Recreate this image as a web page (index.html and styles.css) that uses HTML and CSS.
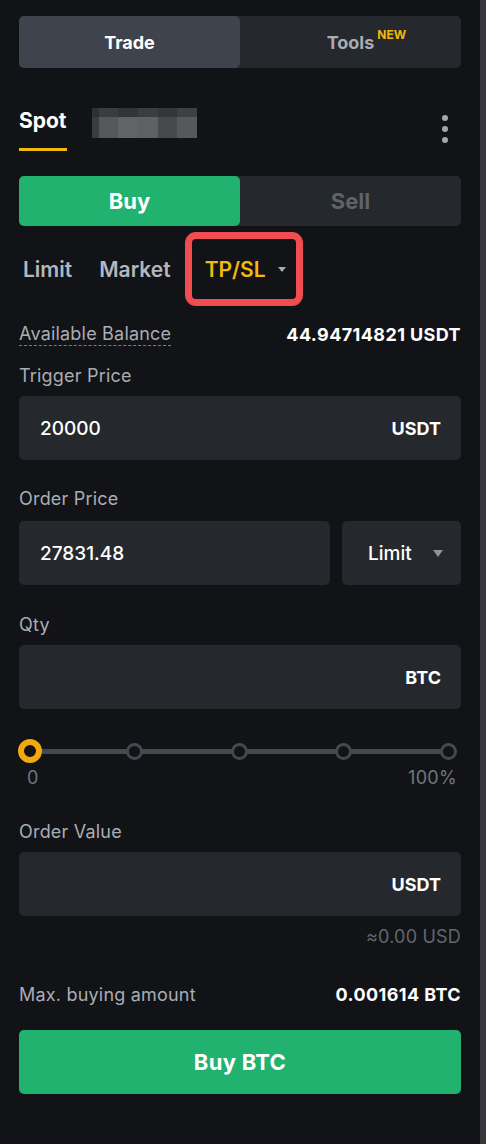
FILE: index.html
```html
<!DOCTYPE html>
<html lang="en">
<head>
<meta charset="utf-8">
<title>Trade</title>
<link rel="stylesheet" href="styles.css">
</head>
<body>
<div class="page">
  <main class="panel">
    <div class="seg top-tabs">
      <div class="seg-item active">Trade</div>
      <div class="seg-item tools"><span class="tools-label">Tools<sup class="new">NEW</sup></span></div>
    </div>

    <div class="spot-row">
      <div class="spot-tab">Spot</div>
      <div class="blur">
        <span class="b c1"></span><span class="b c2"></span><span class="b c3"></span><span class="b c4"></span><span class="b c5"></span><span class="b c6"></span>
        <span class="b d1"></span><span class="b d2"></span><span class="b d3"></span><span class="b d4"></span><span class="b d5"></span><span class="b d6"></span>
      </div>
      <div class="kebab"><i></i><i></i><i></i></div>
    </div>

    <div class="seg side">
      <div class="seg-item buy">Buy</div>
      <div class="seg-item sell">Sell</div>
    </div>

    <div class="types">
      <span class="type t-limit">Limit</span>
      <span class="type t-market">Market</span>
      <span class="type tpsl">TP/SL <span class="caret small"></span></span>
    </div>

    <div class="kv balance">
      <span class="dash">Available Balance</span>
      <span class="val">44.94714821 USDT</span>
    </div>

    <div class="label l-trigger">Trigger Price</div>
    <div class="field"><span class="num">20000</span><span class="unit">USDT</span></div>

    <div class="label l-order">Order Price</div>
    <div class="field-row">
      <div class="field grow"><span class="num">27831.48</span></div>
      <div class="field select"><span class="num">Limit</span><span class="caret"></span></div>
    </div>

    <div class="label l-qty">Qty</div>
    <div class="field"><span class="num"></span><span class="unit">BTC</span></div>

    <div class="slider">
      <div class="track"></div>
      <span class="stop"><span class="dot first"></span></span>
      <span class="stop"><span class="dot"></span></span>
      <span class="stop"><span class="dot"></span></span>
      <span class="stop"><span class="dot"></span></span>
      <span class="stop"><span class="dot"></span></span>
    </div>
    <div class="slider-labels"><span>0</span><span>100%</span></div>

    <div class="label l-value">Order Value</div>
    <div class="field"><span class="num"></span><span class="unit">USDT</span></div>
    <div class="approx">≈0.00 USD</div>

    <div class="kv max">
      <span class="muted">Max. buying amount</span>
      <span class="val">0.001614 BTC</span>
    </div>

    <div class="buy-btn">Buy BTC</div>
  </main>
  <div class="scrollbar"></div>
</div>
</body>
</html>
```
FILE: styles.css
```css
* { box-sizing: border-box; }
html, body { margin: 0; padding: 0; }
body {
  background: #121316;
  font-family: "Inter", "Open Sans", "Liberation Sans", sans-serif;
  color: #eaecef;
  width: 486px;
  height: 1144px;
  overflow: hidden;
}
.page { display: flex; height: 1144px; }
.panel { flex: 1; padding: 16px 19px 0 19px; display: flex; flex-direction: column; }
.scrollbar { width: 6px; background: #35383d; }

.seg { display: flex; height: 52px; background: #25282d; border-radius: 5px; }
.seg-item { flex: 1; display: flex; align-items: center; justify-content: center; font-weight: 700; font-size: 18px; border-radius: 5px; }
.top-tabs .active { background: #3f434b; color: #ffffff; }
.top-tabs .tools { color: #a9acb2; }
.tools-label { position: relative; }
.new { position: absolute; left: 100%; top: -3px; margin-left: 3px; color: #f0b90b; font-size: 12px; font-weight: 700; line-height: 1; }

.spot-row { display: flex; align-items: flex-start; margin-top: 32px; height: 51px; }
.spot-tab { font-size: 21px; font-weight: 700; color: #fff; height: 51px; line-height: 38px; border-bottom: 3px solid #f0b90b; padding-top: 2px; }
.blur { margin-left: 25px; margin-top: 8px; width: 105px; height: 30px; display: grid; grid-template-columns: 7px 19px 20px 20px 19px 20px; grid-template-rows: 9px 21px; }
.b { display: block; }
.c1 { background: #2e3034; } .c2 { background: #3a3c40; } .c3 { background: #323438; } .c4 { background: #3a3c40; } .c5 { background: #343639; } .c6 { background: #3e4044; }
.d1 { background: #3a3c40; } .d2 { background: #55575b; } .d3 { background: #616367; } .d4 { background: #5e6064; } .d5 { background: #47494d; } .d6 { background: #56585c; }
.kebab { margin-left: auto; margin-right: 13px; margin-top: 15px; display: flex; flex-direction: column; gap: 5px; }
.kebab i { width: 6px; height: 6px; border-radius: 50%; background: #a3a7ad; display: block; }

.side { margin-top: 25px; height: 50px; }
.side .buy { background: #21b26f; color: #fff; font-size: 22px; }
.side .sell { color: #5f636b; font-size: 22px; }

.types { display: flex; align-items: center; margin-top: 6px; height: 74px; }
.type { font-size: 21px; font-weight: 600; color: #b3b7be; }
.t-limit { margin-left: 4px; margin-right: 27px; }
.t-market { margin-right: 14px; }
.tpsl { color: #f0b90b; border: 7px solid #ef4d4f; border-radius: 11px; height: 74px; padding: 0 10px 0 13px; display: flex; align-items: center; }
.tpsl .caret { margin-left: 12px; }
.caret { display: inline-block; width: 0; height: 0; border-left: 5px solid transparent; border-right: 5px solid transparent; border-top: 7px solid #8f939a; }
.caret.small { border-left-width: 4px; border-right-width: 4px; border-top: 5px solid #a6aab0; }

.kv { display: flex; justify-content: space-between; align-items: center; font-size: 18px; height: 24px; }
.balance { margin-top: 16px; }
.dash { color: #a9adb4; border-bottom: 1px dashed #7a7e85; line-height: 22px; letter-spacing: 0.2px; }
.val { font-weight: 700; color: #fff; letter-spacing: 0.4px; }
.muted { color: #a9adb4; letter-spacing: 0.2px; }

.label { font-size: 18px; color: #a9adb4; line-height: 24px; letter-spacing: 0.2px; }
.l-trigger { margin-top: 18px; }
.l-order { margin-top: 27px; }
.l-qty { margin-top: 28px; }
.l-value { margin-top: 32px; }

.field { height: 64px; background: #25282d; border-radius: 5px; display: flex; align-items: center; justify-content: space-between; padding: 0 20px 0 21px; margin-top: 8px; }
.num { font-size: 19px; color: #fff; font-weight: 500; }
.unit { font-size: 18px; font-weight: 700; color: #fff; }
.field-row { display: flex; gap: 12px; margin-top: 10px; }
.field-row .field { margin-top: 0; }
.grow { flex: 1; }
.select { width: 119px; padding: 0 18px 0 26px; }

.slider { position: relative; height: 24px; margin: 30px 13px 0 11px; display: flex; justify-content: space-between; align-items: center; }
.track { position: absolute; left: 0; right: 0; top: 10px; height: 5px; background: #45484e; }
.stop { width: 0; height: 24px; display: flex; justify-content: center; align-items: center; position: relative; }
.dot { flex: none; width: 17px; height: 17px; border-radius: 50%; border: 3px solid #45484e; background: #121316; }
.dot.first { width: 24px; height: 24px; border: 6px solid #f0a911; }
.slider-labels { display: flex; justify-content: space-between; font-size: 18px; color: #71767e; line-height: 20px; margin-top: 5px; padding: 0 4px 0 8px; letter-spacing: 0.3px; }

.approx { text-align: right; font-size: 18px; color: #63676e; line-height: 20px; margin-top: 11px; letter-spacing: 0.2px; }
.max { margin-top: 35px; }
.buy-btn { margin-top: 24px; height: 64px; background: #21b26f; border-radius: 5px; color: #fff; font-weight: 700; font-size: 22px; letter-spacing: 0.3px; display: flex; align-items: center; justify-content: center; }
```
